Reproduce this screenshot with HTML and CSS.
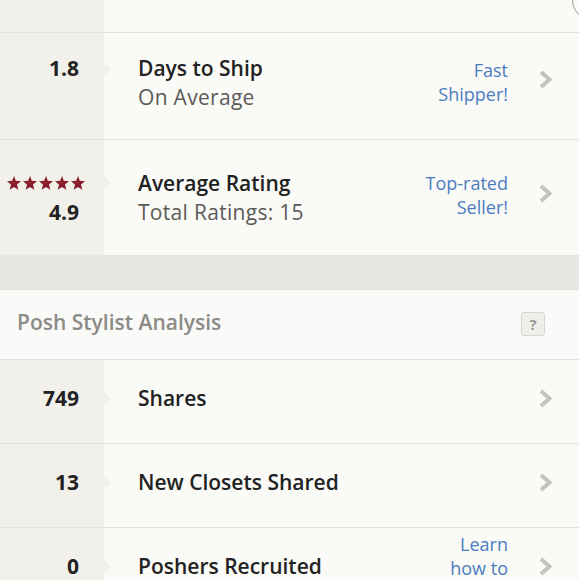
FILE: index.html
```html
<!DOCTYPE html>
<html lang="en">
<head>
    <meta charset="UTF-8">
    <meta name="viewport" content="width=device-width, initial-scale=1.0">
    <title>Seller Stats</title>
    <link rel="stylesheet" href="styles.css">
</head>
<body>
    <div class="stats">
        <div class="row row-top">
            <span class="ring"></span>
        </div>

        <div class="row row-tall">
            <div class="num tip">1.8</div>
            <div class="title">Days to Ship</div>
            <div class="sub">On Average</div>
            <div class="badge">Fast<br>Shipper!</div>
            <div class="chev">
                <svg width="14" height="19" viewBox="0 0 14 19"><path d="M2 2 L10.5 9.5 L2 17" fill="none" stroke="#c2c2be" stroke-width="4"/></svg>
            </div>
        </div>

        <div class="row row-rating">
            <div class="num tip stars">
                <svg width="78" height="14" viewBox="0 0 78 14">
                    <g fill="#8a1e2c">
                        <polygon points="7,0 8.8,4.8 14,5.2 10,8.6 11.3,13.8 7,11 2.7,13.8 4,8.6 0,5.2 5.2,4.8"/>
                        <polygon transform="translate(16,0)" points="7,0 8.8,4.8 14,5.2 10,8.6 11.3,13.8 7,11 2.7,13.8 4,8.6 0,5.2 5.2,4.8"/>
                        <polygon transform="translate(32,0)" points="7,0 8.8,4.8 14,5.2 10,8.6 11.3,13.8 7,11 2.7,13.8 4,8.6 0,5.2 5.2,4.8"/>
                        <polygon transform="translate(48,0)" points="7,0 8.8,4.8 14,5.2 10,8.6 11.3,13.8 7,11 2.7,13.8 4,8.6 0,5.2 5.2,4.8"/>
                        <polygon transform="translate(64,0)" points="7,0 8.8,4.8 14,5.2 10,8.6 11.3,13.8 7,11 2.7,13.8 4,8.6 0,5.2 5.2,4.8"/>
                    </g>
                </svg>
            </div>
            <div class="num num-sub">4.9</div>
            <div class="title">Average Rating</div>
            <div class="sub">Total Ratings: 15</div>
            <div class="badge">Top-rated<br>Seller!</div>
            <div class="chev">
                <svg width="14" height="19" viewBox="0 0 14 19"><path d="M2 2 L10.5 9.5 L2 17" fill="none" stroke="#c2c2be" stroke-width="4"/></svg>
            </div>
        </div>

        <div class="band"></div>

        <div class="section-head">
            <span>Posh Stylist Analysis</span>
            <span class="help">?</span>
        </div>

        <div class="row row-short">
            <div class="num tip">749</div>
            <div class="title">Shares</div>
            <div class="chev">
                <svg width="14" height="19" viewBox="0 0 14 19"><path d="M2 2 L10.5 9.5 L2 17" fill="none" stroke="#c2c2be" stroke-width="4"/></svg>
            </div>
        </div>

        <div class="row row-short">
            <div class="num tip">13</div>
            <div class="title">New Closets Shared</div>
            <div class="chev">
                <svg width="14" height="19" viewBox="0 0 14 19"><path d="M2 2 L10.5 9.5 L2 17" fill="none" stroke="#c2c2be" stroke-width="4"/></svg>
            </div>
        </div>

        <div class="row row-last">
            <div class="num tip">0</div>
            <div class="title">Poshers Recruited</div>
            <div class="badge">Learn<br>how to<br>recruit</div>
            <div class="chev">
                <svg width="14" height="19" viewBox="0 0 14 19"><path d="M2 2 L10.5 9.5 L2 17" fill="none" stroke="#c2c2be" stroke-width="4"/></svg>
            </div>
        </div>
    </div>
</body>
</html>
```

FILE: styles.css
```css
body {
    margin: 0;
    font-family: "Open Sans", "Lato", sans-serif;
    background-color: #fafaf7;
    overflow: hidden;
}
.stats {
    width: 579px;
}
.row {
    display: grid;
    grid-template-columns: 104px 1fr auto 71px;
    grid-template-rows: auto auto;
    align-content: center;
    border-bottom: 1px solid #e2e1dc;
    background: linear-gradient(to right, #f1f0eb 104px, #fafaf7 104px);
    box-sizing: border-box;
}
.row-top {
    height: 33px;
    position: relative;
    overflow: hidden;
}
.ring {
    position: absolute;
    right: -33px;
    top: -20px;
    width: 38px;
    height: 38px;
    border: 1px solid #9a9a96;
    border-radius: 50%;
}
.row-tall {
    height: 107px;
    padding-bottom: 6px;
}
.row-rating {
    height: 115px;
    border-bottom: none;
}
.row-short {
    height: 84px;
    padding-bottom: 6px;
}
.row-last {
    height: 110px;
    align-content: start;
    padding-top: 24px;
}
.num {
    grid-column: 1;
    grid-row: 1;
    text-align: right;
    padding-right: 25px;
    font-weight: 700;
    font-size: 21px;
    line-height: 29px;
    color: #222;
    position: relative;
}
.num-sub {
    grid-row: 2;
}
.stars {
    padding-right: 19px;
    line-height: 0;
    align-self: center;
    height: 29px;
    display: flex;
    align-items: center;
    justify-content: flex-end;
}
.tip::after {
    content: "";
    position: absolute;
    right: -7px;
    top: 50%;
    margin-top: -7px;
    border-top: 7px solid transparent;
    border-bottom: 7px solid transparent;
    border-left: 7px solid #f1f0eb;
}
.title {
    grid-column: 2;
    grid-row: 1;
    padding-left: 34px;
    font-weight: 600;
    font-size: 21px;
    line-height: 29px;
    color: #222;
}
.sub {
    grid-column: 2;
    grid-row: 2;
    padding-left: 34px;
    font-size: 21px;
    line-height: 29px;
    letter-spacing: 0.3px;
    color: #5a5a58;
}
.badge {
    grid-column: 3;
    grid-row: 1 / span 2;
    align-self: center;
    text-align: right;
    font-size: 18px;
    line-height: 24px;
    color: #4a7cc1;
}
.row-tall .badge {
    margin-top: -2px;
}
.row-rating .badge {
    margin-top: -6px;
}
.row-last .badge {
    align-self: start;
    margin-top: -20px;
}
.chev {
    grid-column: 4;
    grid-row: 1 / span 2;
    align-self: center;
    padding-left: 31px;
    line-height: 0;
}
.row-tall .chev {
    margin-top: -8px;
}
.row-rating .chev {
    margin-top: -9px;
}
.row-last .chev {
    align-self: start;
    margin-top: 5px;
}
.band {
    height: 35px;
    background-color: #e7e6e0;
    border-bottom: 1px solid #e0dfd9;
    box-sizing: border-box;
}
.section-head {
    display: flex;
    align-items: center;
    justify-content: space-between;
    height: 70px;
    padding: 0 34px 6px 17px;
    border-bottom: 1px solid #e2e1dc;
    background-color: #fafaf8;
    font-size: 21px;
    font-weight: 600;
    color: #8c8b86;
    box-sizing: border-box;
}
.help {
    width: 22px;
    height: 22px;
    margin-top: 5px;
    border: 1px solid #d6d6d1;
    border-radius: 3px;
    background-color: #efefeb;
    color: #9a9a96;
    font-size: 15px;
    font-weight: 700;
    line-height: 22px;
    text-align: center;
}
```
